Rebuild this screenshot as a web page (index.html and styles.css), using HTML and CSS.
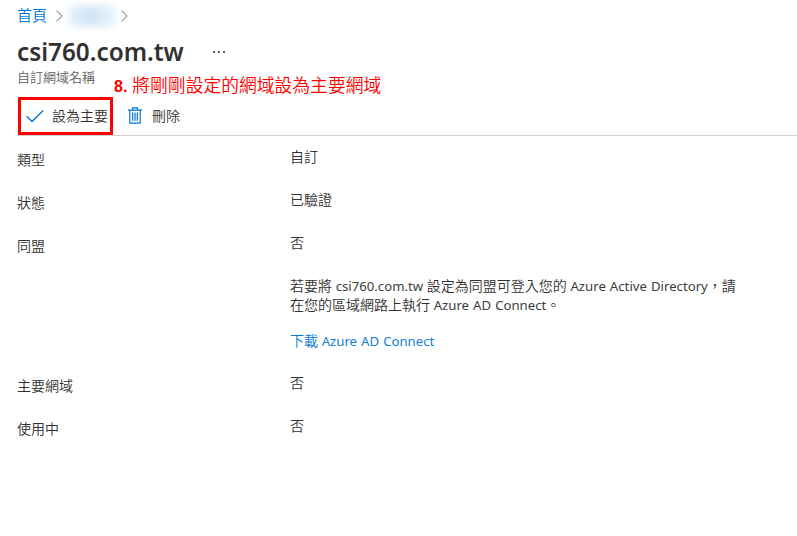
FILE: index.html
```html
<!DOCTYPE html>
<html lang="zh-Hant">
<head>
<meta charset="utf-8">
<title>csi760.com.tw</title>
<link rel="stylesheet" href="styles.css">
</head>
<body>
<nav class="breadcrumb">
  <a class="crumb">首頁</a>
  <svg class="chevron" viewBox="0 0 7 12"><path d="M.6 .6 6 6 .6 11.4"/></svg>
  <span class="redacted"></span>
  <svg class="chevron last" viewBox="0 0 7 12"><path d="M.6 .6 6 6 .6 11.4"/></svg>
</nav>
<header class="header">
  <h1 class="title">csi760.com.tw</h1>
  <span class="more"><i></i><i></i><i></i></span>
</header>
<div class="subtitle">自訂網域名稱</div>
<div class="toolbar">
  <button class="command primary">
    <svg class="check" viewBox="0 0 18 14"><path d="M.7 7.3 6 12.6 17.2 1.4"/></svg>
    <span>設為主要</span>
  </button>
  <button class="command">
    <svg class="trash" viewBox="0 0 14 17"><path d="M0 3.2H14M4.6 3V.8H9.4V3M1.8 3.5V16.2H12.2V3.5M4.7 5.5V13.8M7 5.5V13.8M9.3 5.5V13.8"/></svg>
    <span>刪除</span>
  </button>
  <div class="note"><b>8.</b> <span>將剛剛設定的網域設為主要網域</span></div>
</div>
<dl class="details">
  <dt>類型</dt><dd>自訂</dd>
  <dt>狀態</dt><dd>已驗證</dd>
  <dt>同盟</dt>
  <dd class="federated">
    <p>否</p>
    <p class="help">若要將 <span class="latin">csi760.com.tw</span> 設定為同盟可登入您的 <span class="latin">Azure Active Directory</span>，請<br>在您的區域網路上執行 <span class="latin">Azure AD Connect</span>。</p>
    <a class="download">下載 <span class="latin">Azure AD Connect</span></a>
  </dd>
  <dt>主要網域</dt><dd>否</dd>
  <dt>使用中</dt><dd>否</dd>
</dl>
</body>
</html>
```
FILE: styles.css
```css
* { box-sizing: border-box; margin: 0; padding: 0; }
body {
  background: #fff;
  color: #323130;
  font: 350 14px/19px "Open Sans", "Noto Sans CJK TC", sans-serif;
  overflow: hidden;
}
a { color: #0078d4; }
svg { fill: none; flex: none; }
.breadcrumb {
  display: flex;
  align-items: center;
  height: 31px;
  padding-left: 17px;
}
.crumb { font-size: 15px; }
.chevron { width: 7px; height: 12px; margin-left: 9px; stroke: #979593; stroke-width: 1.1; }
.last { margin-left: 6px; }
.redacted {
  width: 46px;
  height: 20px;
  margin: 1px 0 0 6px;
  border-radius: 4px;
  background: linear-gradient(90deg, #e3eff9, #cfe4f6 50%, #e6f1fa);
  filter: blur(4px);
}
.header { display: flex; align-items: center; height: 38px; padding: 3px 0 0 17px; }
.title { width: 196px; font: 600 24.3px/36px "Noto Sans", sans-serif; white-space: nowrap; }
.more { display: flex; gap: 3px; margin-top: 1px; }
.more i { width: 2px; height: 2px; background: #605e5c; }
.subtitle { height: 28px; padding: 0 17px; font-size: 13px; line-height: 17px; color: #605e5c; }
.toolbar {
  position: relative;
  display: flex;
  height: 39px;
  margin-left: 17px;
  padding-left: 1px;
  border-bottom: 1px solid #d2d0ce;
}
.command {
  display: flex;
  align-items: center;
  height: 38px;
  padding: 0 0 0 15px;
  gap: 10px;
  border: 0;
  background: none;
  color: inherit;
  font: inherit;
}
.command span { padding-bottom: 2px; }
.command svg { stroke: #0078d4; }
.primary { width: 95px; padding: 0 0 0 5px; gap: 8px; border: 3px solid #f00; white-space: nowrap; }
.check { width: 18px; height: 14px; stroke-width: 1.4; }
.trash { width: 14px; height: 17px; margin-bottom: 1px; stroke-width: 1.2; }
.note {
  position: absolute;
  left: 97px;
  top: -22px;
  color: #f00;
  font: 350 17.8px/22px "Liberation Sans", "Noto Sans CJK TC", sans-serif;
  white-space: nowrap;
}
.note b { font-size: 16px; }
.details {
  display: grid;
  grid-template-columns: 273px 1fr;
  grid-template-rows: 43px 43px 140px 43px 43px;
  padding: 11px 0 0 17px;
}
dt { padding-top: 3px; }
.help { margin-top: 24px; white-space: nowrap; }
.latin {
  font: 400 13.2px/1 "Noto Sans", sans-serif;
  word-spacing: .6px;
  color: color-mix(in srgb, currentColor 94%, #fff);
}
.download { display: block; margin-top: 17px; }
```
